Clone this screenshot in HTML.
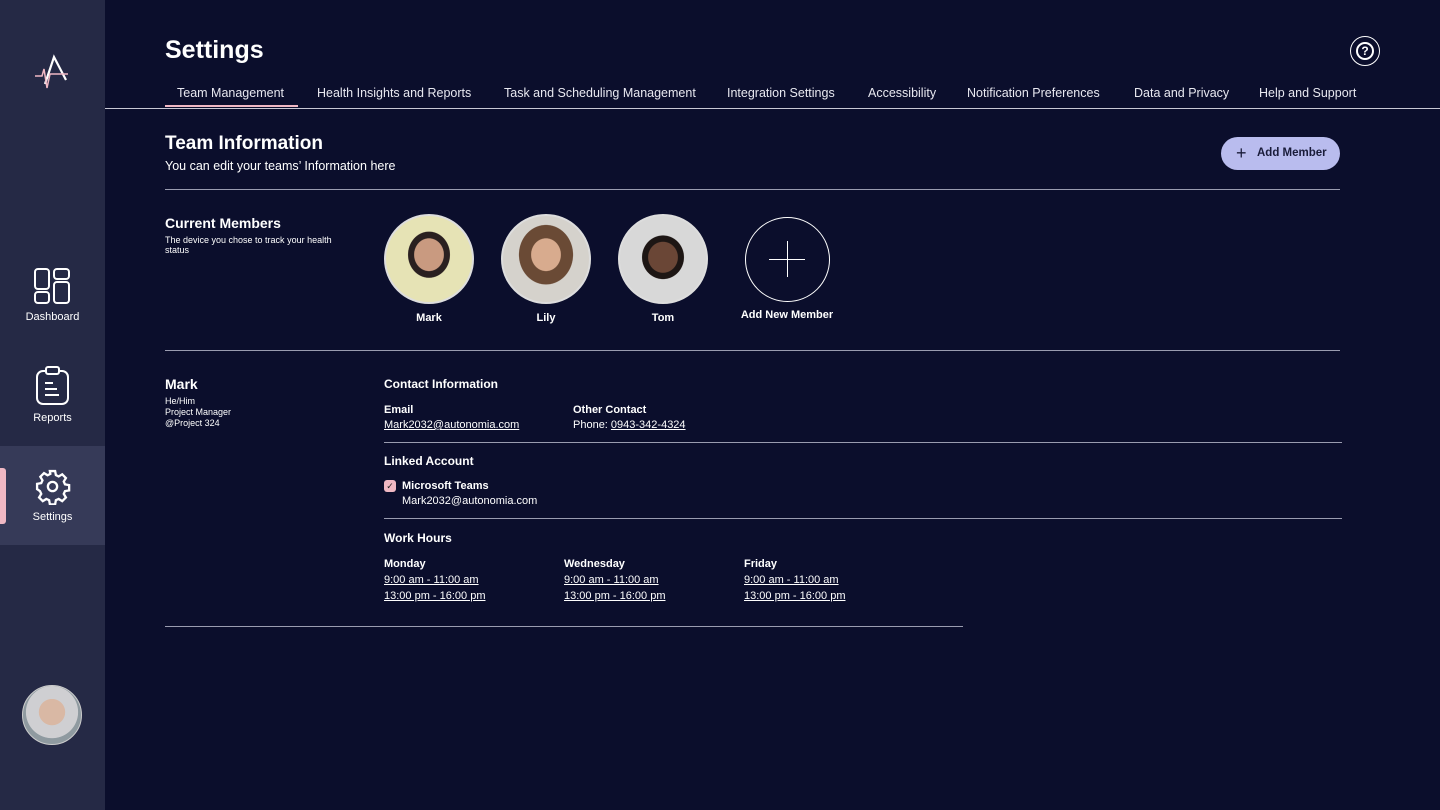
<!DOCTYPE html>
<html><head><meta charset="utf-8"><style>
*{margin:0;padding:0;box-sizing:border-box}
body{width:1440px;height:810px;background:#0b0e2c;color:#fff;font-family:"Liberation Sans",sans-serif;position:relative;overflow:hidden}
.abs{position:absolute}
.side{left:0;top:0;width:105px;height:810px;background:#252945}
.nav{width:105px;text-align:center;font-size:11px;color:#fff}
.tab{top:86px;font-size:12.5px;color:#e8e8f0}
.hr{height:1px;background:#9a9cb0}
.b{font-weight:bold}
.u{text-decoration:underline}
.av{width:90px;height:90px;border-radius:50%;border:2px solid #ddd;overflow:hidden}
.nm{font-size:11px;font-weight:bold;text-align:center;width:90px}
</style></head><body>
<div class="abs side"></div>
<svg class="abs" style="left:34px;top:52px" width="36" height="38" viewBox="0 0 36 38"><path d="M11 32 L20 5 L32 28" stroke="#fff" stroke-width="2.2" fill="none"/><path d="M1 24 L8 24 L10 17 L13 36 L16 22 L34 22" stroke="#f0b8c4" stroke-width="1.5" fill="none"/></svg>
<svg class="abs" style="left:34px;top:268px" width="36" height="36" viewBox="0 0 36 36" fill="none" stroke="#fff" stroke-width="2"><rect x="1" y="1" width="14" height="20" rx="3"/><rect x="1" y="24" width="14" height="11" rx="3"/><rect x="20" y="1" width="15" height="10" rx="3"/><rect x="20" y="14" width="15" height="21" rx="3"/></svg>
<div class="abs nav" style="top:311px">Dashboard</div>
<svg class="abs" style="left:35px;top:366px" width="36" height="40" viewBox="0 0 36 40" fill="none" stroke="#fff" stroke-width="2"><rect x="2" y="5" width="31" height="33" rx="6"/><rect x="11" y="1" width="13" height="7" rx="2" fill="#252945"/><path d="M10 17h8M10 23h12M10 29h14"/></svg>
<div class="abs nav" style="top:412px">Reports</div>
<div class="abs" style="left:0;top:446px;width:105px;height:99px;background:#363a58"></div>
<div class="abs" style="left:0;top:468px;width:6px;height:56px;background:#f0b8c4;border-radius:0 3px 3px 0"></div>
<svg class="abs" style="left:34px;top:468px" width="37" height="37" viewBox="0 0 24 24" fill="none" stroke="#fff" stroke-width="1.5"><path d="M10.3 2h3.4l.5 2.6 1.8.9 2.3-1.4 2.4 2.4-1.4 2.3.8 1.8 2.7.5v3.4l-2.7.5-.8 1.8 1.4 2.3-2.4 2.4-2.3-1.4-1.8.8-.5 2.7h-3.4l-.5-2.7-1.8-.8-2.3 1.4-2.4-2.4 1.4-2.3-.8-1.8L2 13.7v-3.4l2.7-.5.8-1.8-1.4-2.3 2.4-2.4 2.3 1.4 1.8-.9z"/><circle cx="12" cy="12" r="3"/></svg>
<div class="abs nav" style="top:511px">Settings</div>
<div class="abs" style="left:22px;top:685px;width:60px;height:60px;border-radius:50%;background:radial-gradient(circle at 50% 45%,#d9b8a4 0 30%,#cfcfd2 31% 60%,#8f9aa0 61%);border:1px solid #ccc"></div>

<div class="abs" style="left:165px;top:36px;font-size:25px;font-weight:bold">Settings</div>
<div class="abs" style="left:1350px;top:36px;width:30px;height:30px;border:1.5px solid #fff;border-radius:50%"></div>
<div class="abs" style="left:1356px;top:42px;width:18px;height:18px;border:2px solid #fff;border-radius:50%;font-size:12px;font-weight:bold;text-align:center;line-height:14px">?</div>
<div class="abs tab" style="left:177px">Team Management</div>
<div class="abs" style="left:165px;top:105px;width:133px;height:2px;background:#f0b8c4"></div>
<div class="abs tab" style="left:317px">Health Insights and Reports</div>
<div class="abs tab" style="left:504px">Task and Scheduling Management</div>
<div class="abs tab" style="left:727px">Integration Settings</div>
<div class="abs tab" style="left:868px">Accessibility</div>
<div class="abs tab" style="left:967px">Notification Preferences</div>
<div class="abs tab" style="left:1134px">Data and Privacy</div>
<div class="abs tab" style="left:1259px">Help and Support</div>
<div class="abs hr" style="left:105px;top:108px;width:1335px;background:#c8c8d4"></div>

<div class="abs" style="left:165px;top:133px;font-size:19px;font-weight:bold">Team Information</div>
<div class="abs" style="left:165px;top:159px;font-size:12.5px">You can edit your teams’ Information here</div>
<div class="abs" style="left:1221px;top:137px;width:119px;height:33px;border-radius:17px;background:#b9bcee;color:#1a1c3a;font-size:11.5px;font-weight:bold;line-height:33px;padding-left:36px">Add Member</div>
<div class="abs" style="left:1236px;top:144px;color:#1a1c3a;font-size:18px;line-height:18px">+</div>
<div class="abs hr" style="left:165px;top:189px;width:1175px"></div>

<div class="abs" style="left:165px;top:215px;font-size:14px;font-weight:bold">Current Members</div>
<div class="abs" style="left:165px;top:235px;font-size:9px;width:190px">The device you chose to track your health status</div>
<div class="abs av" style="left:384px;top:214px;background:radial-gradient(ellipse at 50% 45%,#c99a80 0 24%,#2a2020 25% 34%,#e6e3b5 35%)"></div>
<div class="abs av" style="left:501px;top:214px;background:radial-gradient(ellipse at 50% 45%,#d8ab8e 0 24%,#6a4a35 25% 44%,#d5d2cc 45%)"></div>
<div class="abs av" style="left:618px;top:214px;background:radial-gradient(ellipse at 50% 48%,#6a4636 0 24%,#1d1614 25% 34%,#d8d8d8 35%)"></div>
<div class="abs nm" style="left:384px;top:312px">Mark</div>
<div class="abs nm" style="left:501px;top:312px">Lily</div>
<div class="abs nm" style="left:618px;top:312px">Tom</div>
<div class="abs" style="left:745px;top:217px;width:85px;height:85px;border:1.5px solid #fff;border-radius:50%"></div>
<div class="abs" style="left:769px;top:259px;width:36px;height:1px;background:#fff"></div>
<div class="abs" style="left:787px;top:241px;width:1px;height:36px;background:#fff"></div>
<div class="abs" style="left:727px;top:309px;width:120px;text-align:center;font-size:11px;font-weight:bold">Add New Member</div>
<div class="abs hr" style="left:165px;top:350px;width:1175px"></div>

<div class="abs" style="left:165px;top:376px;font-size:14px;font-weight:bold">Mark</div>
<div class="abs" style="left:165px;top:396px;font-size:9px;line-height:11px">He/Him<br>Project Manager<br>@Project 324</div>
<div class="abs b" style="left:384px;top:377px;font-size:12px">Contact Information</div>
<div class="abs b" style="left:384px;top:404px;font-size:11px">Email</div>
<div class="abs u" style="left:384px;top:419px;font-size:11px">Mark2032@autonomia.com</div>
<div class="abs b" style="left:573px;top:404px;font-size:11px">Other Contact</div>
<div class="abs" style="left:573px;top:419px;font-size:11px">Phone: <span class="u">0943-342-4324</span></div>
<div class="abs hr" style="left:384px;top:442px;width:958px"></div>
<div class="abs b" style="left:384px;top:454px;font-size:12px">Linked Account</div>
<div class="abs" style="left:384px;top:480px;width:12px;height:12px;border-radius:3px;background:#f0b8c4;color:#222;font-size:9px;line-height:12px;text-align:center">✓</div>
<div class="abs b" style="left:402px;top:480px;font-size:11px">Microsoft Teams</div>
<div class="abs" style="left:402px;top:495px;font-size:11px">Mark2032@autonomia.com</div>
<div class="abs hr" style="left:384px;top:518px;width:958px"></div>
<div class="abs b" style="left:384px;top:531px;font-size:12px">Work Hours</div>
<div class="abs" style="left:384px;top:556px;font-size:11px;line-height:16px"><b>Monday</b><br><span class="u">9:00 am - 11:00 am</span><br><span class="u">13:00 pm - 16:00 pm</span></div>
<div class="abs" style="left:564px;top:556px;font-size:11px;line-height:16px"><b>Wednesday</b><br><span class="u">9:00 am - 11:00 am</span><br><span class="u">13:00 pm - 16:00 pm</span></div>
<div class="abs" style="left:744px;top:556px;font-size:11px;line-height:16px"><b>Friday</b><br><span class="u">9:00 am - 11:00 am</span><br><span class="u">13:00 pm - 16:00 pm</span></div>
<div class="abs hr" style="left:165px;top:626px;width:798px"></div>
</body></html>
